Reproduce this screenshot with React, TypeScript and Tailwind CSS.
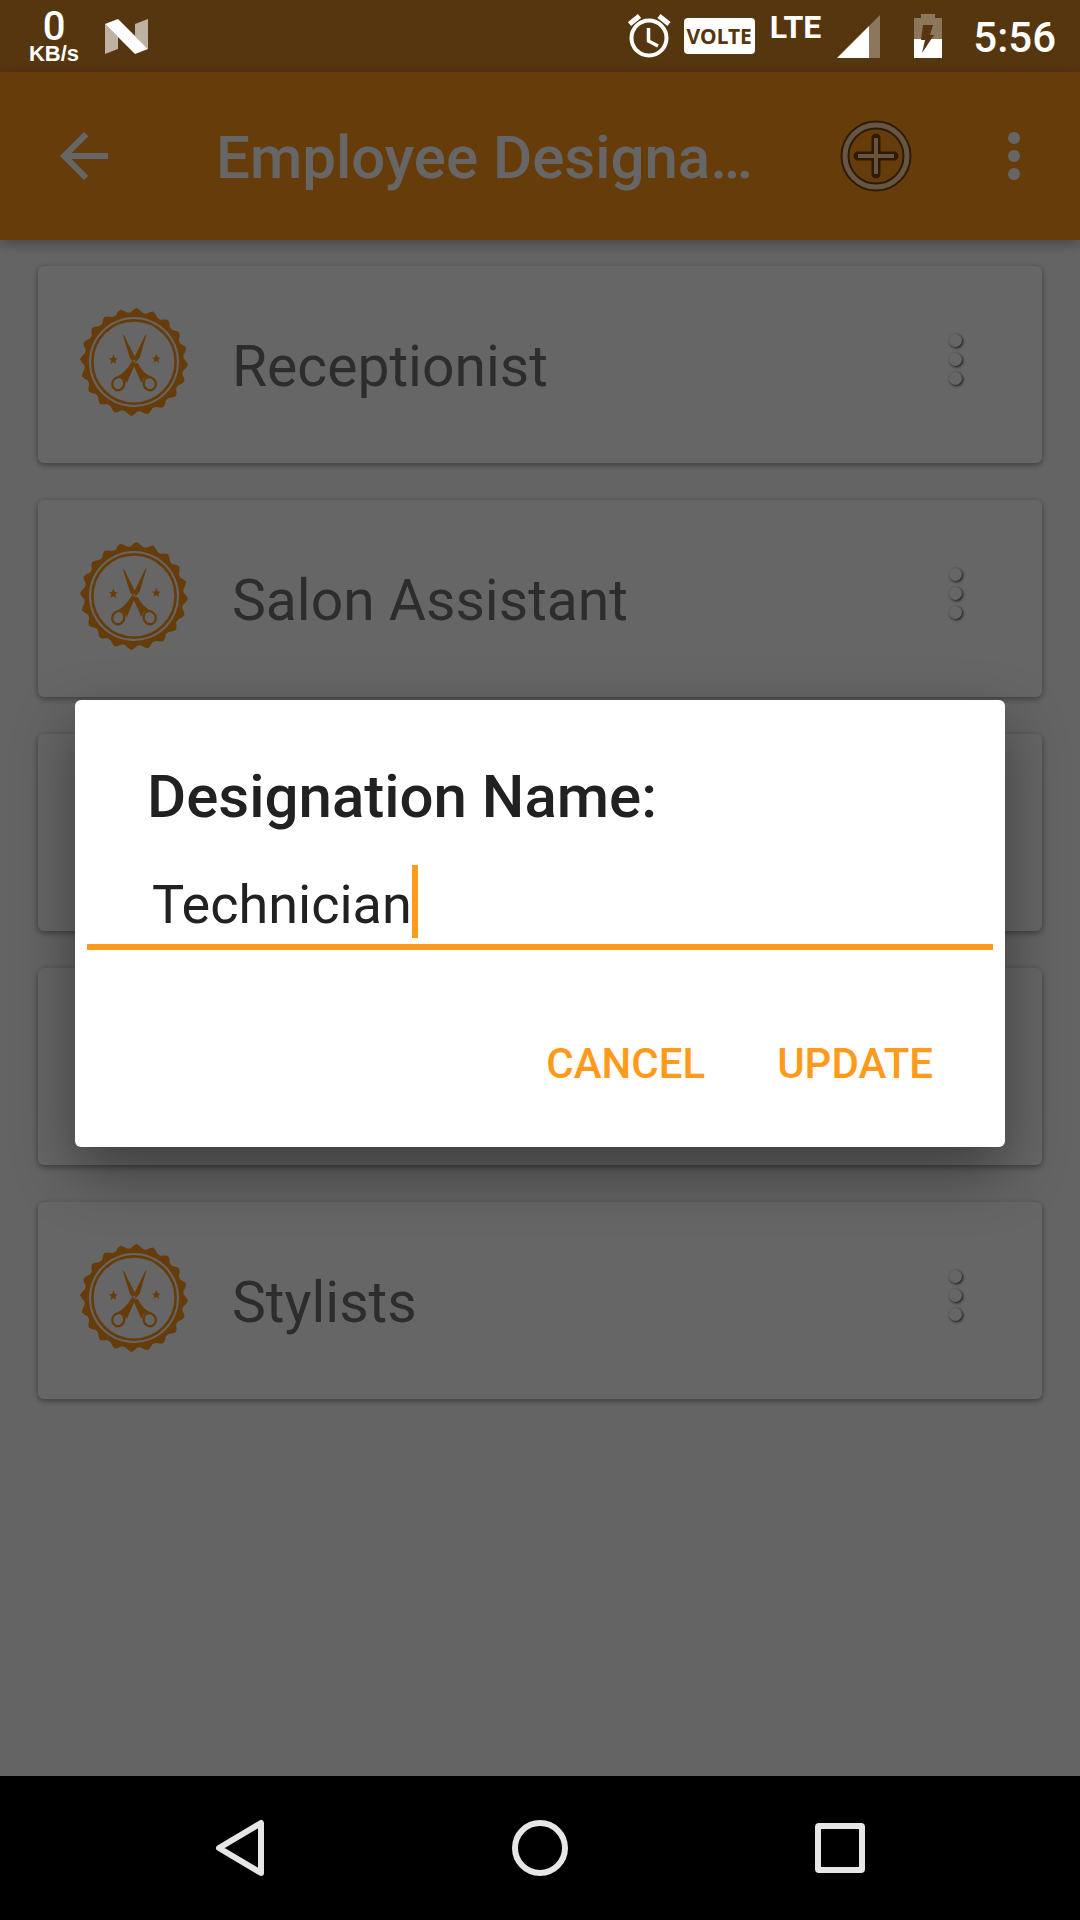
import React from "react";

const TEETH = 20;

function sealPath() {
  const cx = 223;
  const cy = 215;
  const points: string[] = [];
  for (let i = 0; i < TEETH; i++) {
    const start = -90 + 3 + (i * 360) / TEETH;
    const steps: [number, number][] = [
      [-3, 158],
      [0, 162],
      [3, 158],
      [7, 150],
      [11, 149],
    ];
    for (const [offset, r] of steps) {
      const a = ((start + offset) * Math.PI) / 180;
      points.push(`${(cx + r * Math.cos(a)).toFixed(1)} ${(cy + r * Math.sin(a)).toFixed(1)}`);
    }
  }
  return `M${points.join("L")}Z`;
}

const SEAL = sealPath();

function SalonBadge() {
  return (
    <svg className="size-28 shrink-0 text-[#ff9a1a]" viewBox="55 47 336 336" fill="currentColor" aria-hidden="true">
      <path fillRule="evenodd" d={`${SEAL}M88 215a135 135 0 1 0 270 0a135 135 0 1 0 -270 0Z`} />
      <circle cx="223" cy="215" r="125" fill="none" stroke="currentColor" strokeWidth="8" />
      <path d="M188 130L194 137L229 206L222 216L211 204Z" />
      <path d="M261 130L255 137L223 203L230 214L241 200Z" />
      <path d="M216 214L227 219L205 270Q200 285 196 268Q190 258 172 259Q200 243 216 214Z" />
      <path d="M227 219L234 217Q247 245 274 259Q256 257 250 266Q246 285 241 268L220 222Z" />
      <g fill="none" stroke="currentColor" strokeWidth="7">
        <ellipse cx="176" cy="280" rx="18" ry="20" transform="rotate(22 176 280)" />
        <ellipse cx="270" cy="280" rx="18" ry="20" transform="rotate(-22 270 280)" />
      </g>
      <circle cx="223" cy="211" r="6" />
      <circle cx="223" cy="211" r="3" fill="#fff" />
      <path d="M161 192L165 203L175 204L167 210L170 221L161 215L152 221L155 210L147 204L157 203Z" />
      <path d="M290 190L294 201L303 202L296 208L299 218L290 212L281 218L284 208L277 202L286 201Z" />
    </svg>
  );
}

function StatusBar() {
  return (
    <div className="flex h-[72px] shrink-0 items-center justify-between bg-[#56360f] pl-7 pr-6 text-white">
      <div className="flex items-center gap-[25px]">
        <div className="flex w-[52px] flex-col items-center">
          <span className="pt-1 text-[40px] leading-[30px] font-medium">0</span>
          <span className="mt-[2px] font-['Liberation_Sans',sans-serif] text-[22px] leading-5 font-bold">KB/s</span>
        </div>
        <svg className="h-[35px] w-[43px]" viewBox="0 0 43 35" fill="#fff" aria-hidden="true">
          <path d="M0 5L13 18V30L0 35Z" opacity=".62" />
          <path d="M43 0V30L30 17V5Z" opacity=".62" />
          <path d="M0 5L13 0L43 30L30 35Z" />
        </svg>
      </div>
      <div className="flex items-center">
        <svg className="mr-[13px] h-[44px] w-[43px]" viewBox="0 0 43 44" fill="none" stroke="#fff" strokeWidth="4" aria-hidden="true">
          <circle cx="21" cy="24" r="17.5" />
          <path d="M20.5 14V27L30 32" strokeWidth="3.5" />
          <path d="M1.5 10L11.5 2M41 10L31 2" strokeWidth="5" />
        </svg>
        <span className="flex h-9 w-[71px] items-center justify-center rounded bg-white font-['Noto_Sans',sans-serif] text-[21px] leading-none font-bold text-[#56360f]">
          VOLTE
        </span>
        <span className="mb-[18px] ml-[15px] text-[32px] leading-9 font-bold">LTE</span>
        <svg className="ml-4 h-[43px] w-[44px]" viewBox="0 0 44 43" fill="#fff" aria-hidden="true">
          <path d="M43 0V43H32V11Z" opacity=".32" />
          <path d="M0 43L32 11V43Z" />
        </svg>
        <svg className="ml-[33px] h-[44px] w-7" viewBox="0 0 28 44" fill="#fff" aria-hidden="true">
          <path d="M7 0H21V4H28V25H0V4H7Z" opacity=".32" />
          <path d="M0 25H28V44H0Z" />
          <path d="M9 11H19L16 21H20L8 39L11 26H7Z" fill="#56360f" />
        </svg>
        <span className="ml-[31px] pt-1 text-[42px] leading-[50px] font-medium">5:56</span>
      </div>
    </div>
  );
}

function AppBar() {
  return (
    <header className="relative flex h-[168px] shrink-0 items-center bg-[#fd9619] px-[30px] text-white shadow-[0_4px_12px_rgba(0,0,0,0.3)]">
      <button type="button" aria-label="Back" className="ml-[18px]">
        <svg className="size-[72px]" viewBox="0 0 24 24" fill="currentColor">
          <path d="M20 11H7.83l5.59-5.59L12 4l-8 8 8 8 1.41-1.41L7.83 13H20v-2z" />
        </svg>
      </button>
      <h1 className="ml-24 flex-1 truncate pt-1 text-[60px] leading-[72px] font-medium">Employee Designa…</h1>
      <button type="button" aria-label="Add designation">
        <svg className="size-[72px]" viewBox="0 0 72 72" fill="none">
          <g stroke="#000" strokeOpacity=".55">
            <circle cx="36" cy="36" r="31" strokeWidth="9" />
            <path d="M36 18V54M18 36H54" strokeWidth="9" strokeLinecap="round" strokeLinejoin="round" />
          </g>
          <g stroke="#ffd5a8">
            <circle cx="36" cy="36" r="31" strokeWidth="5" />
            <path d="M36 18V54M18 36H54" strokeWidth="4" />
          </g>
        </svg>
      </button>
      <button type="button" aria-label="More options" className="ml-[66px]">
        <svg className="size-[72px]" viewBox="0 0 24 24" fill="currentColor">
          <circle cx="12" cy="6" r="2" />
          <circle cx="12" cy="12" r="2" />
          <circle cx="12" cy="18" r="2" />
        </svg>
      </button>
    </header>
  );
}

function DesignationCard({ name }: { name?: string }) {
  return (
    <li className="flex h-[197px] items-center rounded-md bg-white pr-[75px] pb-[6px] pl-10 shadow-[0_2px_6px_rgba(0,0,0,0.4)]">
      {name && (
        <>
          <SalonBadge />
          <span className="ml-[42px] flex-1 pt-[10px] text-[57px] leading-[68px] text-[#707070]">{name}</span>
          <button
            type="button"
            aria-label={`Options for ${name}`}
            className="flex w-6 flex-col items-center gap-[6px] pb-1"
          >
            <i className="size-[13px] rounded-full bg-white shadow-[1px_1px_3px_rgba(0,0,0,0.8)]" />
            <i className="size-[13px] rounded-full bg-white shadow-[1px_1px_3px_rgba(0,0,0,0.8)]" />
            <i className="size-[13px] rounded-full bg-white shadow-[1px_1px_3px_rgba(0,0,0,0.8)]" />
          </button>
        </>
      )}
    </li>
  );
}

function DesignationDialog() {
  const [value, setValue] = React.useState("Technician");
  return (
    <div
      role="dialog"
      aria-modal="true"
      className="flex-1 rounded-md bg-white pt-[62px] pb-[29px] text-[#212121] shadow-[0_24px_60px_rgba(0,0,0,0.4)]"
    >
      <label htmlFor="designation" className="block px-[72px] text-[60px] leading-[70px] font-medium">
        Designation Name:
      </label>
      <div className="mx-3 mt-[33px] flex items-end border-b-[6px] border-[#ff9a1a] pb-[6px] pl-[65px]">
        <input
          id="designation"
          type="text"
          value={value}
          onChange={(e) => setValue(e.target.value)}
          className="h-[67px] text-[54px] leading-[67px] caret-transparent outline-none [field-sizing:content]"
        />
        <span aria-hidden="true" className="h-[73px] w-[6px] bg-[#ff9a1a]" />
      </div>
      <div className="mt-[60px] flex justify-end gap-6 pr-12">
        <button type="button" className="h-[108px] px-6 text-[42px] leading-[50px] font-medium text-[#ff9a1a]">
          CANCEL
        </button>
        <button type="button" className="h-[108px] px-6 text-[42px] leading-[50px] font-medium text-[#ff9a1a]">
          UPDATE
        </button>
      </div>
    </div>
  );
}

function NavigationBar() {
  return (
    <nav className="flex h-36 shrink-0 items-center justify-around bg-black px-[90px]">
      <button type="button" aria-label="Back">
        <svg className="size-[60px]" viewBox="0 0 60 60" fill="none" stroke="#e6e6e6" strokeWidth="6" strokeLinejoin="round">
          <path d="M51 5V55L9 30Z" />
        </svg>
      </button>
      <button type="button" aria-label="Home">
        <svg className="size-[60px]" viewBox="0 0 60 60" fill="none" stroke="#e6e6e6" strokeWidth="6">
          <circle cx="30" cy="30" r="25" />
        </svg>
      </button>
      <button type="button" aria-label="Recent apps">
        <svg className="size-[60px]" viewBox="0 0 60 60" fill="none" stroke="#e6e6e6" strokeWidth="6" strokeLinejoin="round">
          <rect x="8" y="8" width="44" height="44" rx="1" />
        </svg>
      </button>
    </nav>
  );
}

export default function App() {
  const cards: (string | undefined)[] = ["Receptionist", "Salon Assistant", undefined, undefined, "Stylists"];
  return (
    <div className="flex min-h-screen flex-col font-[Roboto,sans-serif]">
      <StatusBar />
      <div className="relative flex flex-1 flex-col bg-[#fafafa]">
        <AppBar />
        <ul className="flex flex-col gap-[37px] px-[38px] pt-[26px] pb-10">
          {cards.map((name, i) => (
            <DesignationCard key={i} name={name} />
          ))}
        </ul>
        <div className="absolute inset-0 flex items-center overflow-hidden bg-black/60 px-[75px] pb-[2px]">
          <DesignationDialog />
        </div>
      </div>
      <NavigationBar />
    </div>
  );
}
